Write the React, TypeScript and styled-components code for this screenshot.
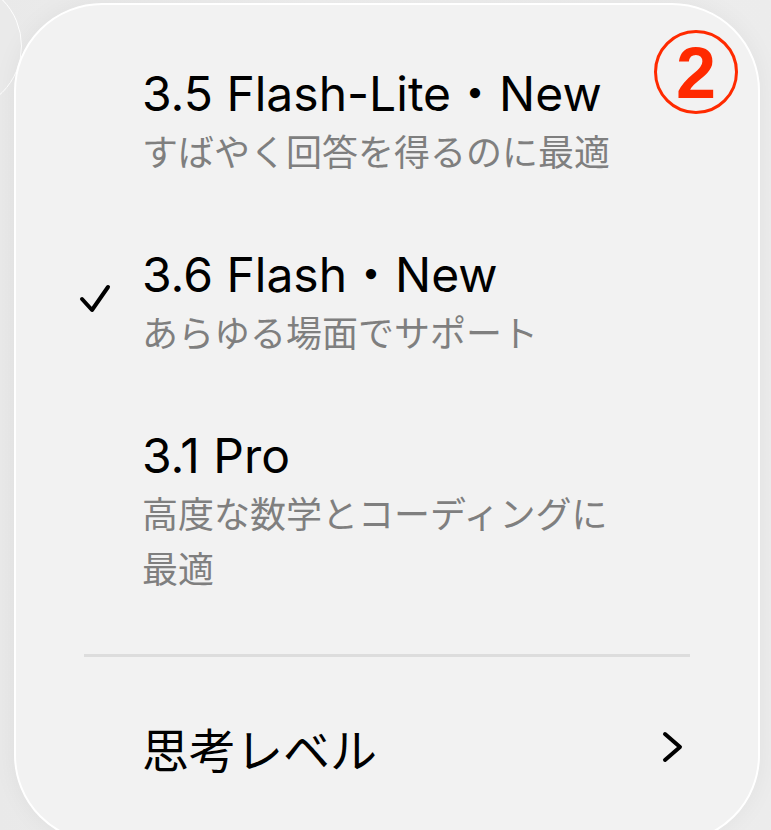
import styled, { createGlobalStyle } from "styled-components";

const GlobalStyle = createGlobalStyle`
  html, body {
    margin: 0;
    padding: 0;
    background: #ececec;
    font-family: Inter, "Noto Sans CJK JP", sans-serif;
    overflow: hidden;
  }
`;

const models = [
  { name: "3.5 Flash-Lite・New", desc: "すばやく回答を得るのに最適", selected: false },
  { name: "3.6 Flash・New", desc: "あらゆる場面でサポート", selected: true },
  { name: "3.1 Pro", desc: "高度な数学とコーディングに最適", selected: false },
];

const App = () => {
  return (
    <>
      <GlobalStyle />
      <Stage>
        <BackButton />
        <Panel>
          <Badge>2</Badge>
          <List>
            {models.map((m) => (
              <Item key={m.name}>
                <CheckCell>
                  {m.selected && (
                    <svg width="32" height="30" viewBox="0 0 32 30">
                      <path
                        d="M3 15 L13 26 L29 3"
                        fill="none"
                        stroke="#000"
                        strokeWidth="4"
                        strokeLinecap="round"
                        strokeLinejoin="round"
                      />
                    </svg>
                  )}
                </CheckCell>
                <Texts>
                  <ModelName>{m.name}</ModelName>
                  <ModelDesc>{m.desc}</ModelDesc>
                </Texts>
              </Item>
            ))}
          </List>
          <Divider />
          <Footer>
            <FooterLabel>思考レベル</FooterLabel>
            <svg width="22" height="32" viewBox="0 0 22 32">
              <path
                d="M3 3 L18 16 L3 29"
                fill="none"
                stroke="#000"
                strokeWidth="4"
                strokeLinecap="round"
                strokeLinejoin="round"
              />
            </svg>
          </Footer>
        </Panel>
      </Stage>
    </>
  );
};

export default App;

const Stage = styled.div`
  position: relative;
  width: 771px;
  height: 830px;
  overflow: hidden;
  background: linear-gradient(90deg, #e9e9e9 0%, #efefef 40%, #ececec 100%);
`;

const BackButton = styled.div`
  position: absolute;
  left: -110px;
  top: -20px;
  width: 130px;
  height: 130px;
  border-radius: 50%;
  background: #eaeaea;
  border: 1.5px solid #ffffff;
`;

const Panel = styled.div`
  position: relative;
  box-sizing: border-box;
  margin: 3px 0 0 14px;
  width: 746px;
  height: 840px;
  background: #f2f2f2;
  border: 2.5px solid #ffffff;
  border-radius: 88px;
  box-shadow: 0 0 24px rgba(0, 0, 0, 0.05);
  padding-top: 60px;
`;

const Badge = styled.div`
  position: absolute;
  top: 25px;
  right: 20px;
  box-sizing: border-box;
  width: 84px;
  height: 84px;
  border-radius: 50%;
  border: 3.5px solid #ff2a00;
  color: #ff2a00;
  font-family: "Liberation Sans", Arial, sans-serif;
  font-weight: 700;
  font-size: 72px;
  line-height: 80px;
  text-align: center;
`;

const List = styled.div`
  display: flex;
  flex-direction: column;
  gap: 68px;
`;

const Item = styled.div`
  display: grid;
  grid-template-columns: 126px 500px;
`;

const CheckCell = styled.div`
  display: flex;
  justify-content: flex-end;
  align-items: flex-start;
  padding: 38px 31px 0 0;
`;

const Texts = styled.div`
  display: flex;
  flex-direction: column;
`;

const ModelName = styled.div`
  font-size: 48px;
  line-height: 58px;
  color: #000;
`;

const ModelDesc = styled.div`
  font-family: "Noto Sans CJK JP", sans-serif;
  font-size: 36px;
  line-height: 55px;
  color: #7f7f7f;
`;

const Divider = styled.div`
  margin: 59px 0 0 68px;
  width: 606px;
  height: 2.5px;
  background: #dddddd;
`;

const Footer = styled.div`
  display: flex;
  align-items: center;
  justify-content: space-between;
  margin: 0 74px 0 126px;
  height: 181px;
`;

const FooterLabel = styled.div`
  font-family: "Noto Sans CJK JP", sans-serif;
  font-size: 47px;
  color: #000;
`;
